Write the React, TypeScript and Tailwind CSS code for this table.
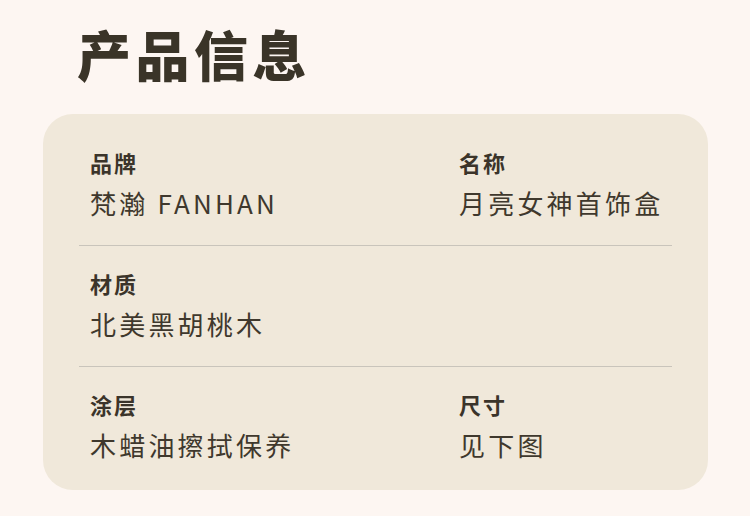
const rows = [
  [
    { label: "品牌", value: "梵瀚 FANHAN" },
    { label: "名称", value: "月亮女神首饰盒" },
  ],
  [{ label: "材质", value: "北美黑胡桃木" }],
  [
    { label: "涂层", value: "木蜡油擦拭保养" },
    { label: "尺寸", value: "见下图" },
  ],
];

const App = () => {
  return (
    <div
      className="min-h-[516px] w-[750px] bg-[#fdf6f2] pl-[43px] pt-[27px]"
      style={{ fontFamily: '"Noto Sans CJK SC", "Noto Sans", sans-serif' }}
    >
      <h1 className="pl-[34px] text-[54px] font-black leading-none tracking-[4.5px] text-[#3a3428]">
        产品信息
      </h1>

      <div className="mt-[33px] w-[665px] rounded-[30px] bg-[#f0e8da] px-[36px] pb-[3px] pt-[11px]">
        {rows.map((row, i) => (
          <div
            key={i}
            className={`grid grid-cols-[369px_1fr] px-[11px] pb-[29px] pt-[26px] ${
              i < rows.length - 1 ? "border-b-[1.5px] border-[#c9c4bb]" : ""
            }`}
          >
            {row.map((item) => (
              <div key={item.label} className="whitespace-nowrap">
                <div className="text-[22px] font-semibold leading-none tracking-[2px] text-[#3b342a]">
                  {item.label}
                </div>
                <div className="mt-[17px] text-[26px] leading-none tracking-[3.2px] text-[#3f382d]">
                  {item.value}
                </div>
              </div>
            ))}
          </div>
        ))}
      </div>
    </div>
  );
};

export default App;
